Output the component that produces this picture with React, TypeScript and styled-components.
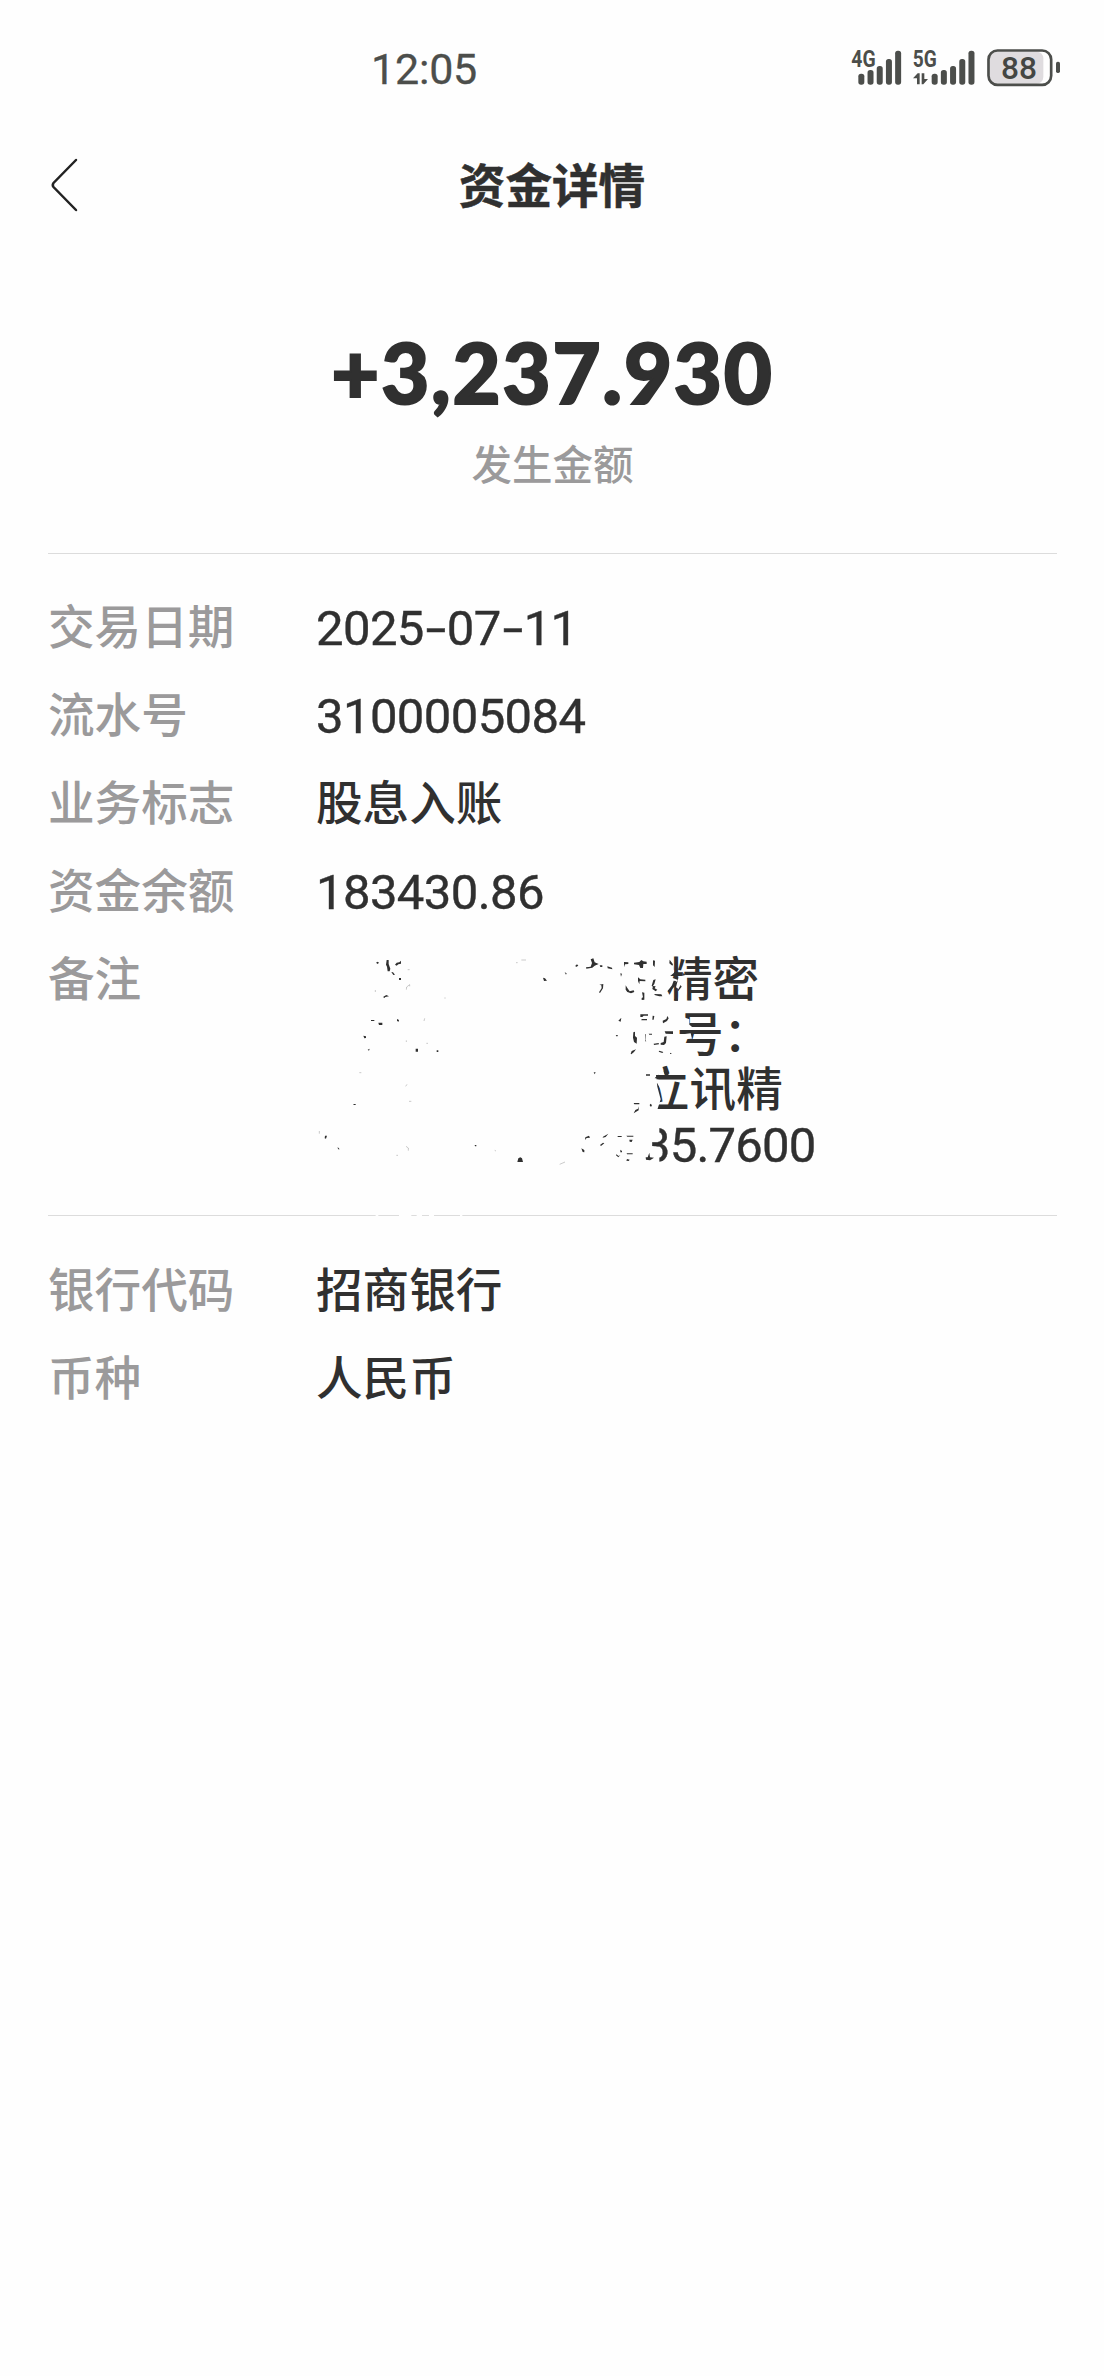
import React from "react";
import styled, { createGlobalStyle } from "styled-components";

const INK = "#303030";
const MUTED = "#9b9a9b";
const PAPER = "#fefefe";
const STATUS = "#4c4e4b";

const GlobalStyle = createGlobalStyle`
  * { box-sizing: border-box; }
  html, body { margin: 0; background: ${PAPER}; }
  body { font-family: Roboto, "Noto Sans CJK SC", sans-serif; color: ${INK}; }
`;

const Screen = styled.main`
  width: 1104px;
  height: 2376px;
  overflow: hidden;
  background: ${PAPER};
`;

const StatusBar = styled.header`
  display: flex;
  justify-content: space-between;
  align-items: center;
  height: 140px;
  padding: 0 24px 0 371px;
`;

const Clock = styled.time`
  margin-bottom: 3px;
  font-size: 43px;
  line-height: 50px;
  letter-spacing: -0.2px;
  color: ${STATUS};
  -webkit-text-stroke: 0.3px ${STATUS};
`;

const StatusIcons = styled.svg`
  display: block;
  width: 250px;
  height: 70px;
  font-family: Roboto, sans-serif;
`;

const NavBar = styled.nav`
  display: grid;
  grid-template-columns: 100px 1fr 100px;
  align-items: center;
  height: 90px;
  padding: 0 0 0 48px;
  margin-right: 48px;
`;

const BackButton = styled.button`
  display: flex;
  width: 60px;
  padding: 0;
  border: 0;
  background: none;
  color: #222;
`;

const Title = styled.h1`
  margin: 0;
  padding-top: 3px;
  text-align: center;
  font-size: 46.6px;
  line-height: 60px;
  font-weight: 700;
  -webkit-text-stroke: 0.5px ${INK};
`;

const Summary = styled.section`
  display: flex;
  flex-direction: column;
  align-items: center;
  margin: 0 47px 0 48px;
  padding-top: 92px;
  height: 324px;
  border-bottom: 1px solid #dcdcdc;
`;

const Amount = styled.strong`
  font-family: Lato, sans-serif;
  font-size: 83px;
  line-height: 100px;
  font-weight: 900;
  letter-spacing: 1.8px;
  -webkit-text-stroke: 2px ${INK};
`;

const Caption = styled.span`
  margin-top: 16px;
  font-size: 40.5px;
  line-height: 56px;
  font-weight: 500;
  color: ${MUTED};
`;

const Details = styled.dl<{ $top: number; $bottom?: number; $divider?: boolean }>`
  display: flex;
  flex-direction: column;
  gap: 33px;
  margin: 0 47px 0 48px;
  padding: ${(p) => p.$top}px 0 ${(p) => p.$bottom ?? 0}px;
  border-bottom: ${(p) => (p.$divider ? "1px solid #dcdcdc" : "0")};
  position: relative;
`;

const Row = styled.div`
  display: grid;
  grid-template-columns: 268px 1fr;
`;

const Label = styled.dt`
  font-size: 46.6px;
  line-height: 55px;
  font-weight: 500;
  color: ${MUTED};
`;

const Value = styled.dd<{ $numeric?: boolean }>`
  margin: 0;
  font-size: ${(p) => (p.$numeric ? 49 : 46.6)}px;
  line-height: 55px;
  font-weight: ${(p) => (p.$numeric ? 400 : 500)};
  letter-spacing: ${(p) => (p.$numeric ? "-0.6px" : "0")};
  -webkit-text-stroke: ${(p) => (p.$numeric ? "0.4px" : "0")} ${INK};
`;

const Dash = styled.span`
  display: inline-block;
  width: 23px;
  text-align: center;
  transform: scaleX(1.5);
`;

const NoteLine = styled.div<{ $indent: number; $numeric?: boolean }>`
  height: 55px;
  padding-left: ${(p) => p.$indent}px;
  white-space: nowrap;
  font-size: ${(p) => (p.$numeric ? 49 : 46.6)}px;
  font-weight: ${(p) => (p.$numeric ? 400 : 500)};
  letter-spacing: ${(p) => (p.$numeric ? "-0.8px" : "0")};
  -webkit-text-stroke: ${(p) => (p.$numeric ? "0.4px" : "0")} ${INK};
`;

const Scratches = styled.svg`
  position: absolute;
  left: 252px;
  top: 376px;
  width: 540px;
  height: 300px;
  pointer-events: none;
`;

const BAR_TOPS = [116, 105, 93, 72, 47];

const SignalBars = ({ x }: { x: number }) => (
  <g fill={STATUS}>
    {BAR_TOPS.map((top, i) => (
      <rect key={top} x={x + i * 27.6} y={top} width="18" height={149 - top} rx="8" />
    ))}
  </g>
);

const Status = () => (
  <StatusIcons viewBox="0 0 750 210">
    <text x="64" y="97" fontSize="69" fontWeight="700" fill={STATUS} textLength="73" lengthAdjust="spacingAndGlyphs">4G</text>
    <SignalBars x={85} />
    <text x="248" y="97" fontSize="69" fontWeight="700" fill={STATUS} textLength="72" lengthAdjust="spacingAndGlyphs">5G</text>
    <path d="M249 130 L263 115 H269 V148 H261 V130Z M275 115 H283 V132 H294 L280 148 H275Z" fill={STATUS} />
    <SignalBars x={305} />
    <rect x="479" y="50" width="161" height="96" rx="20" fill="#dfdcdf" />
    <rect x="475.500" y="46.500" width="188" height="103" rx="27" fill="none" stroke={STATUS} strokeWidth="8" />
    <rect x="678" y="80" width="12" height="34" rx="5" fill={STATUS} />
    <text x="513" y="132" fontSize="96" fontWeight="500" fill="#444643" textLength="108" lengthAdjust="spacingAndGlyphs">88</text>
  </StatusIcons>
);

/* Worn-away areas of the note, and the flecks of ink left around them. */
const NoteScratches = () => (
  <Scratches viewBox="0 0 1620 900">
    <g fill={PAPER}>
      <path d="M1080 80 H1119 L1122 128 L1108 140 L1134 150 L1100 185 L1120 215 H1080Z" />
      <path d="M1136 140 L1158 134 L1160 190 L1152 215 H1134 L1140 180 L1128 172Z" />
      <path d="M1132 250 H1152 V262 L1168 268 V284 L1176 290 L1150 296Z M1155 312 L1172 310 L1176 326 L1150 328Z" />
      <path d="M1030 400 H1064 L1072 470 L1082 508 L1070 545 H1030Z M1064 446 L1085 452 L1098 476 L1090 500 L1082 478Z" />
      <path d="M1030 580 H1078 V628 L1056 636 V648 L1078 656 V710 H1030Z" />
      <path d="M227 850h8v10h-8z M297 850h37v10h-37z M350 850h16v10h-16z M387 850h15v10h-15z M480 850h7v10h-7z" />
    </g>
    <g fill={INK}>
      <path d="M228 98l5-3 4 3-4 4z M260 90h6v12l5 14-2 8h-6l-2-14-3-6z M285 104l5-6 8-1 5-5v9l-8 2-5 4z M274 126l5 1 6 7-5 1z M297 144h6v6h-6z M250 200l9-5 8 4-11 2-4 4z" />
      <path d="M213 270h10v3h-10z M235 278h12v7h-10z M291 267l6 3-1 5-5-2z M190 317l8 2v5l-5 1z M203 359l6-3-2 6z M347 356h7v9h-7z M410 361h5v5h-5z M160 522h7v3h-6z M75 617h6l-3 9-4-1z M113 651l6 7h-5z" />
      <path d="M729 143l6 2 6 7-9 1z M794 127l6 3-2 4z M652 696l3-11 6-3 5 3 3 11z M524 645h5v4h-4z" />
      <path d="M826 107l5-4 4 4-7 4z M858 112l14-2 4-11-4-11 8-3 4 12 12 5-12 5-7 6-18 3z M899 106h8v5h-6z M922 109l14 4 1 5-14-3z M898 164l12-2-1 13-9 14-3-2 8-13-1-8z" />
      <path d="M972 96l13 1v5l-10 1-3 9z M1002 98l16-2 6-6 6 4 10 1v7h-10l-1 12h-8l-4-9-15-2z M1059 91l6 1-1 19-5-5z M961 130l5 1-3 9z M1014 142l7 6 15 1v5l-17-1-1 10-4-10z M977 166l5 8 7 10 12-3 2 5-10 4-11-4-5-7z M1060 150l7-2-4 14-6 8-2-3z M1059 168l8 1-3 6 8 4-5 5-10-7z M1026 187l7 1v21l-8 1v-6l4-2z M1062 192l22 1 3 6h-9l-12-3z" />
      <path d="M1109 89l10 14-2 4-9-7z M1103 184l13-18 5-14 7 1-2 14-19 19z M1123 207l8-3 3 8h-10z M1145 170l-10 13-2-2 9-16z M1151 129l5 6-9 2z" />
      <path d="M955 272l9-9-2 12z M1021 253h23v4h-13l-4 4h-6z M1025 267h16v4h-17z M1058 257l5 1-2 11h-4z M1088 272l11-5 3-9 4 7-5 8-12 7z M947 315h7l-3 5z M1000 307l5-2v13l6 5-1 18-8-5-3-13z M1036 312l2 1-2 18 3 3h-4z M1046 311h10v3h-8z M1094 304h25v8l-22-1z M1093 320l7-1-2 20-6 6-10-1v-5l9-3z M1061 341l15-2 1 4-15 2z M992 371l3-8 13-5-6 8-8 7z M1078 362l12 4-3 3-11-4z M1110 368l6 4h-6z" />
      <path d="M881 427h6l-3 6z M1038 433h12v4h-12z M1092 413h7l7 15-1 10h-9l-5-13z M1065 443l10-9 6 3-2 8h-15z M1051 521l5 4-3 6-4-5z M1001 519h17v4h-15z M1016 529v12l-15 9 5-10 8-4z" />
      <path d="M856 622l11-5 3 6-10 1-5 6z M844 655l9 5v7l-5-1z M909 620l16-9-8 10-9 2z M900 645l9-7 4 2-10 8z M953 618h12v3h-12z M979 617h21v3h-18z M988 629h10l-3 7-6-1z M961 659l5 4v4h-5z M980 670h18v3h-17z M949 673l7 5 5-3-6 7-7-6z M981 687l8 2-3 4-7-1z M1037 682h6l5-14 2 14 12 1-12 8-12-2z" />
    </g>
    <g fill="none" stroke={INK} strokeWidth="1.500" opacity="0.5">
      <path d="M319 179l1-8 9-7v5 M226 180v6 M664 90h14 M648 98h5 M323 119h6 M374 265l-2 8 M319 331v5 M379 340h5 M178 428h6 M317 469l4-6 M58 603v8 M318 649l7 5v8 M289 676h5 M327 514h7 M584 661l4 2 M435 202v4 M779 703l16-7" />
    </g>
  </Scratches>
);

export default function App() {
  return (
    <>
      <GlobalStyle />
      <Screen>
        <StatusBar>
          <Clock>12:05</Clock>
          <Status />
        </StatusBar>
        <NavBar>
          <BackButton aria-label="返回">
            <svg width="32" height="56" viewBox="0 0 32 56" fill="none" stroke="currentColor" strokeWidth="2.500" strokeLinecap="round">
              <path d="M28 3 L5.500 26 Q4 28 5.500 30 L28 53" />
            </svg>
          </BackButton>
          <Title>资金详情</Title>
        </NavBar>
        <Summary>
          <Amount>+3,237.930</Amount>
          <Caption>发生金额</Caption>
        </Summary>
        <Details $top={47} $bottom={42} $divider>
          <Row>
            <Label>交易日期</Label>
            <Value $numeric>2025<Dash>-</Dash>07<Dash>-</Dash>11</Value>
          </Row>
          <Row>
            <Label>流水号</Label>
            <Value $numeric>3100005084</Value>
          </Row>
          <Row>
            <Label>业务标志</Label>
            <Value>股息入账</Value>
          </Row>
          <Row>
            <Label>资金余额</Label>
            <Value $numeric>183430.86</Value>
          </Row>
          <Row>
            <Label>备注</Label>
            <Value>
              <NoteLine $indent={350}>精密</NoteLine>
              <NoteLine $indent={361}>号：</NoteLine>
              <NoteLine $indent={327}>立讯精</NoteLine>
              <NoteLine $indent={327} $numeric>35.7600</NoteLine>
            </Value>
          </Row>
          <NoteScratches />
        </Details>
        <Details $top={48}>
          <Row>
            <Label>银行代码</Label>
            <Value>招商银行</Value>
          </Row>
          <Row>
            <Label>币种</Label>
            <Value>人民币</Value>
          </Row>
        </Details>
      </Screen>
    </>
  );
}
